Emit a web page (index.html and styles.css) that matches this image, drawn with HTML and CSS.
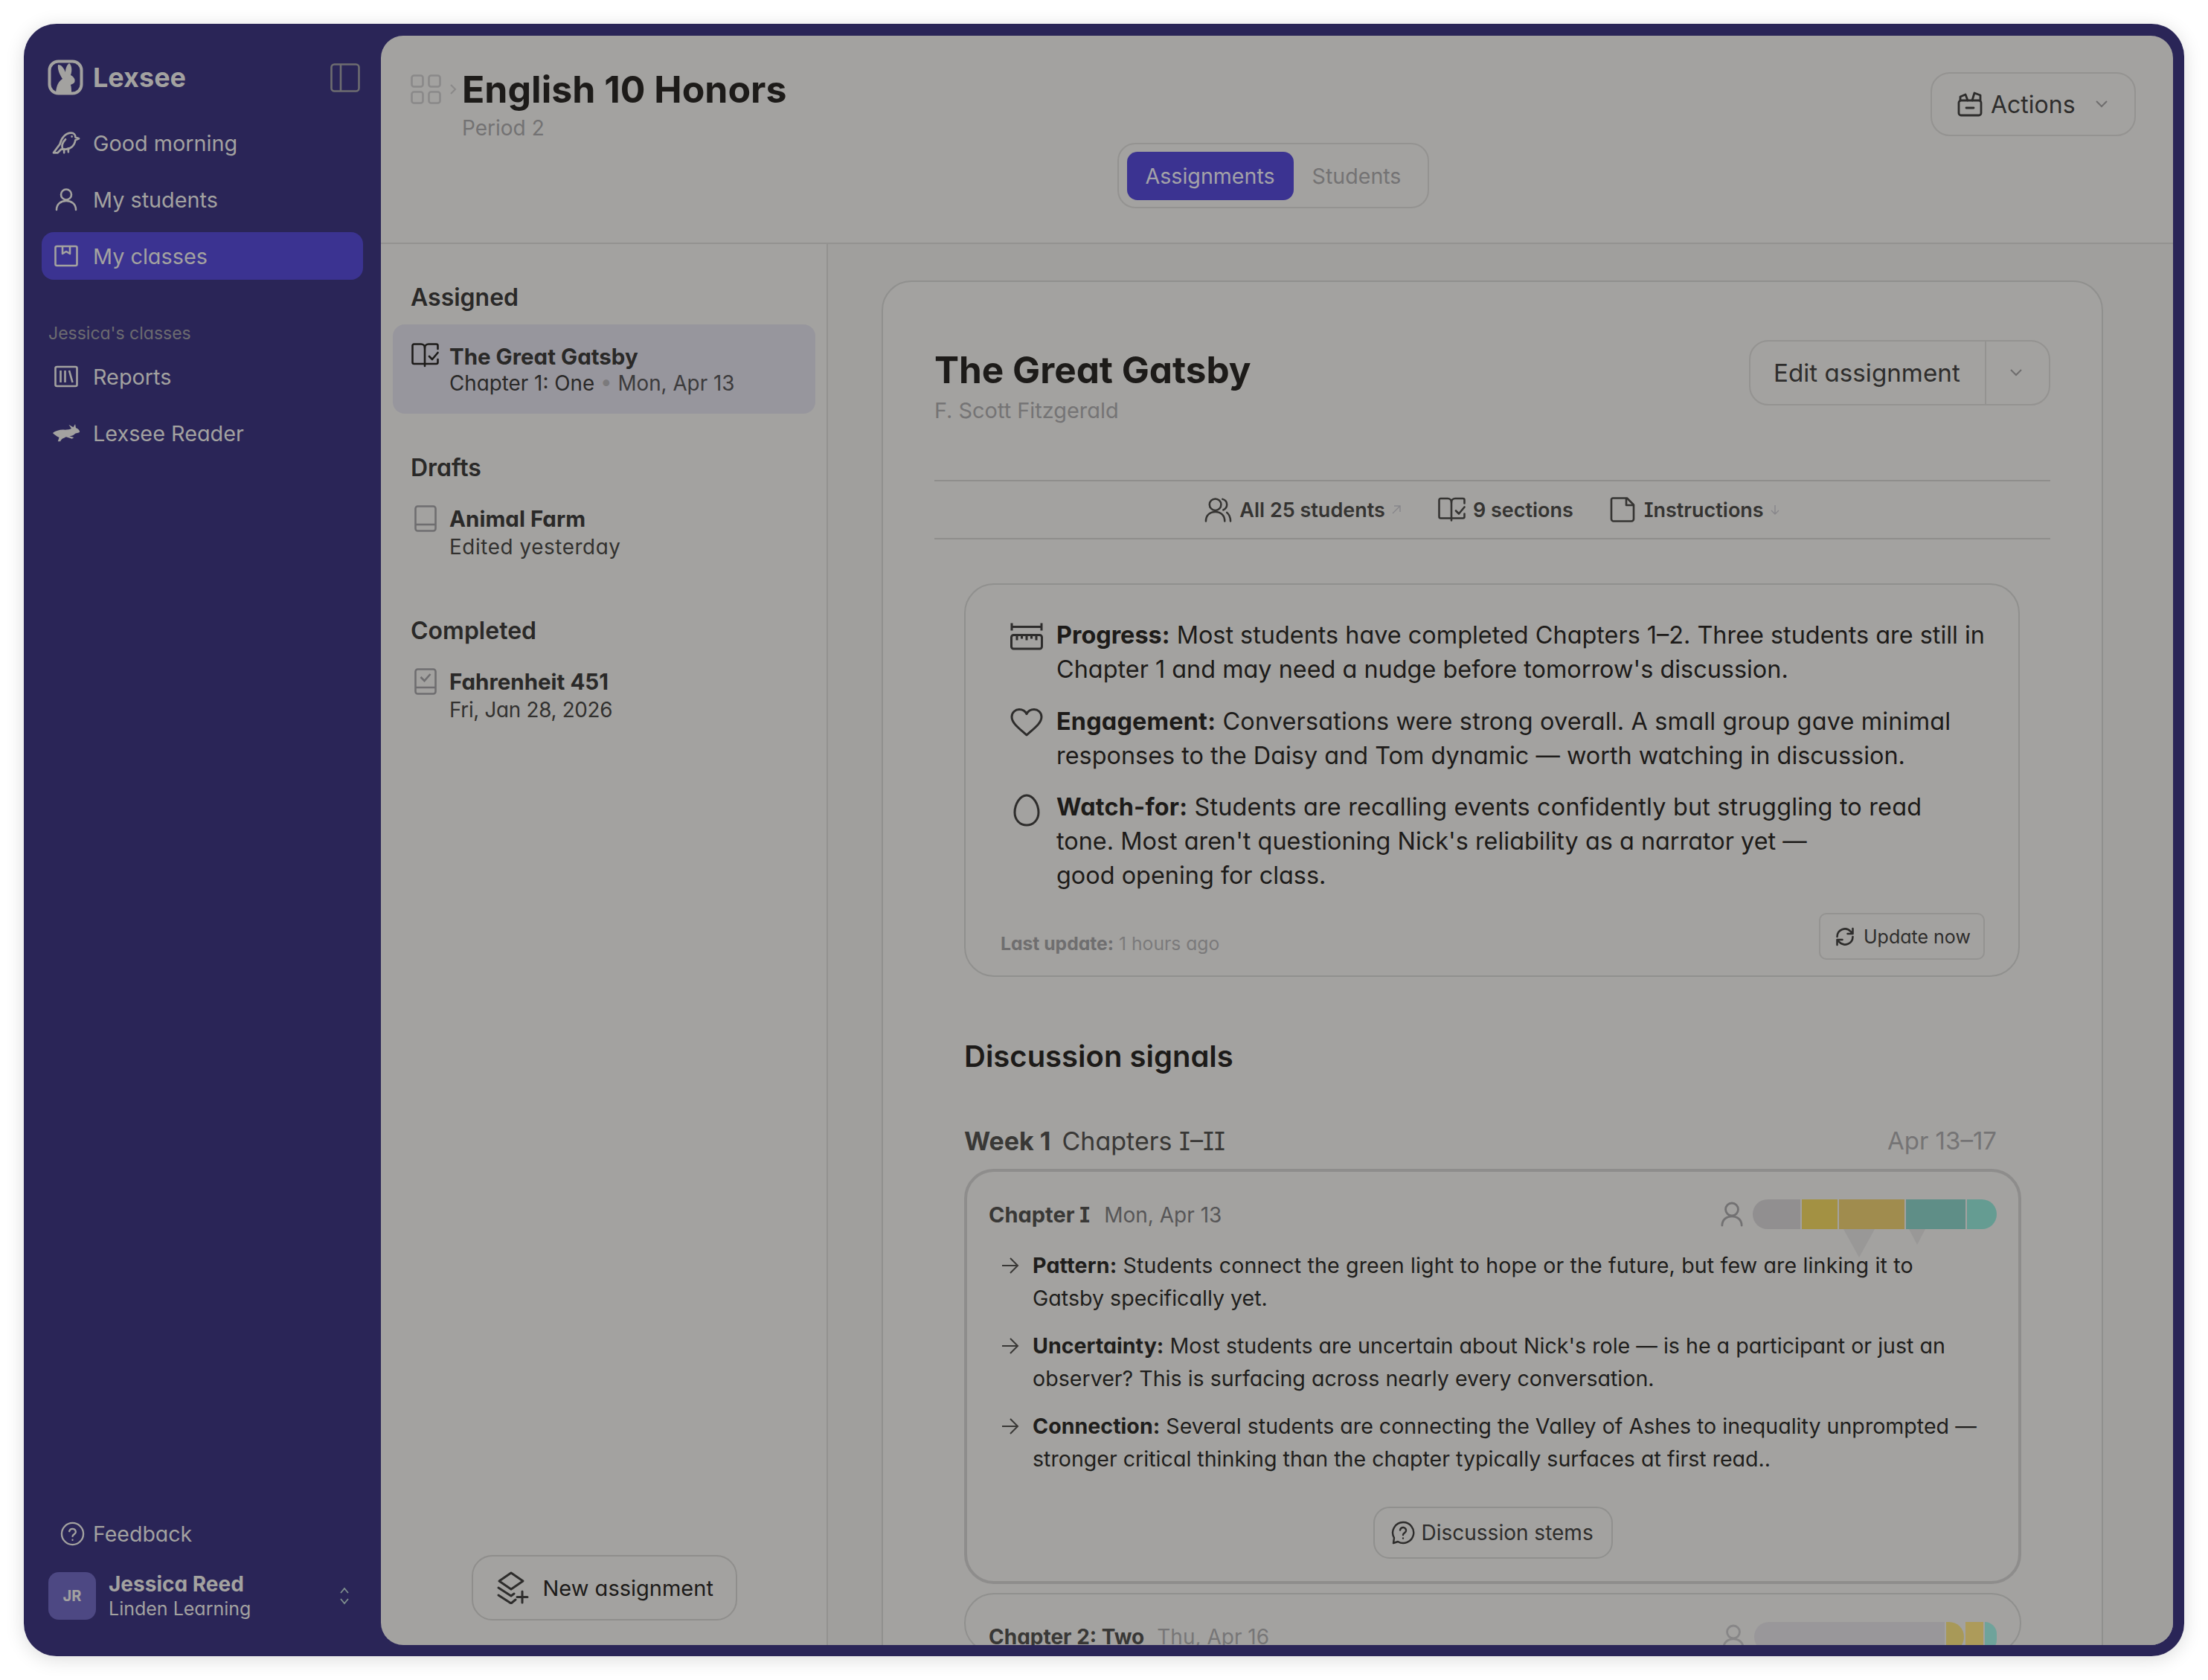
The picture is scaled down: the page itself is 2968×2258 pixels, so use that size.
FILE: index.html
```html
<!DOCTYPE html>
<html lang="en">
<head>
    <meta charset="UTF-8" />
    <title>Lexsee - English 10 Honors</title>
    <link rel="stylesheet" href="styles.css">
</head>
<body>
<div class="frame">
    <aside class="sidebar">
        <div class="brand">
            <svg class="brand-logo" viewBox="0 0 48 48">
                <rect x="2.5" y="2.5" width="43" height="43" rx="12" fill="none" stroke="currentColor" stroke-width="4" />
                <path fill="currentColor" d="M11 44C12 34 15 29 20 26C16 20 13 13 14 7C19 7 22 12 24 17C24 12 26 7 29 5C33 8 33 16 31 21C35 23 38 27 36 31C34 33 32 33 31 34C32 37 32 40 32 44Z" />
            </svg>
            <span class="brand-name">Lexsee</span>
            <svg class="brand-toggle" viewBox="0 0 40 39">
                <rect x="1.5" y="1.5" width="37" height="36" rx="4" fill="none" stroke="currentColor" stroke-width="2.6" />
                <path d="M14 2V37" stroke="currentColor" stroke-width="2.6" />
            </svg>
        </div>

        <nav class="nav">
            <a class="nav-item">
                <svg class="nav-icon nav-icon-wide" viewBox="0 0 40 32" fill="none" stroke="currentColor" stroke-width="2.8" stroke-linejoin="round" stroke-linecap="round">
                    <path d="M2 30L11 18C13 9 19 2 27 2C31 2 33 5 33 8L38 10L33 12C32 20 26 25 19 25L13 25L8 30Z" />
                    <path d="M19 11C15 15 13 20 15 25M17 25V30M23 24V29M28 7V7.1" />
                </svg>
                <span>Good morning</span>
            </a>
            <a class="nav-item">
                <svg class="nav-icon" viewBox="0 0 32 32" fill="none" stroke="currentColor" stroke-width="2.6" stroke-linecap="round">
                    <circle cx="16" cy="9.5" r="7" />
                    <path d="M3 30C3 22 9 18 16 18S29 22 29 30" />
                </svg>
                <span>My students</span>
            </a>
            <a class="nav-item nav-item-active">
                <svg class="nav-icon" viewBox="0 0 32 32" fill="none" stroke="currentColor" stroke-width="2.6" stroke-linejoin="round">
                    <rect x="1.5" y="3" width="29" height="26" rx="2" />
                    <path d="M11 3V13L16 10L21 13V3" />
                </svg>
                <span>My classes</span>
            </a>
        </nav>

        <div class="nav-label">Jessica's classes</div>
        <nav class="nav">
            <a class="nav-item">
                <svg class="nav-icon" viewBox="0 0 32 32" fill="none" stroke="currentColor" stroke-width="2.6" stroke-linejoin="round">
                    <rect x="1.5" y="3" width="29" height="26" rx="2" />
                    <path d="M8.5 8V24M14.5 8V24M20 8L24.5 24" />
                </svg>
                <span>Reports</span>
            </a>
            <a class="nav-item">
                <svg class="nav-icon nav-icon-wide" viewBox="0 0 44 30">
                    <path fill="currentColor" d="M1 15C6 11 14 9 20 10C24 10 28 9 30 8L26 2L33 6L36 1L37 7C40 8 43 11 43 13C43 15 38 15 36 16C33 19 30 20 27 20L34 22L31 24L22 21C18 23 14 24 13 28L9 28L11 22C7 20 4 18 1 15Z" />
                </svg>
                <span>Lexsee Reader</span>
            </a>
        </nav>

        <div class="sidebar-footer">
            <a class="feedback">
                <svg class="feedback-icon" viewBox="0 0 34 34" fill="none" stroke="currentColor" stroke-width="2.4" stroke-linecap="round">
                    <circle cx="17" cy="17" r="15" />
                    <path d="M12.5 13.5a4.6 4.6 0 0 1 9 1c0 3-4.5 3.5-4.5 6" />
                    <path d="M17 25.5V25.6" />
                </svg>
                <span>Feedback</span>
            </a>
            <div class="user">
                <div class="user-avatar">JR</div>
                <div class="user-text">
                    <div class="user-name">Jessica Reed</div>
                    <div class="user-org">Linden Learning</div>
                </div>
                <svg class="user-switch" viewBox="0 0 14 24" fill="none" stroke="currentColor" stroke-width="1.8">
                    <path d="M2 8L7 2L12 8M2 16L7 22L12 16" />
                </svg>
            </div>
        </div>
    </aside>

    <div class="content">
        <header class="page-head">
            <div class="crumb">
                <svg class="crumb-grid" viewBox="0 0 41 40" fill="none" stroke="currentColor" stroke-width="2.6">
                    <rect x="1.5" y="1.5" width="15" height="15" rx="3" />
                    <rect x="24.5" y="1.5" width="15" height="15" rx="3" />
                    <rect x="1.5" y="23.5" width="15" height="15" rx="3" />
                    <rect x="24.5" y="23.5" width="15" height="15" rx="3" />
                </svg>
                <svg class="crumb-sep" viewBox="0 0 10 16" fill="none" stroke="currentColor" stroke-width="2">
                    <path d="M2 2L8 8L2 14" />
                </svg>
                <div>
                    <h1 class="page-title">English 10 Honors</h1>
                    <div class="page-sub">Period 2</div>
                </div>
            </div>
            <div class="tabs">
                <a class="tab tab-active">Assignments</a>
                <a class="tab">Students</a>
            </div>
            <button class="actions">
                <svg class="actions-icon" viewBox="0 0 34 34" fill="none" stroke="currentColor" stroke-width="2.8" stroke-linejoin="round" stroke-linecap="round">
                    <rect x="2" y="12" width="30" height="20" rx="3" />
                    <path d="M12 22H22M4 12V7L11 4L14 12M20 12L23 2L31 5V12" />
                </svg>
                <span>Actions</span>
                <svg class="actions-chevron" viewBox="0 0 18 10" fill="none" stroke="currentColor" stroke-width="2">
                    <path d="M2 1L9 8L16 1" />
                </svg>
            </button>
        </header>

        <div class="page-body">
            <section class="assignments">
                <div class="list-section">
                    <h2 class="list-label">Assigned</h2>
                    <div class="list-item list-item-active">
                        <svg class="list-icon" viewBox="0 0 37 33" fill="none" stroke="currentColor" stroke-width="2.6" stroke-linejoin="round" stroke-linecap="round">
                            <path d="M18 28H3.5A2 2 0 0 1 1.5 26V3.5A2 2 0 0 1 3.5 1.5H13A5 5 0 0 1 18 6.5V31" />
                            <path d="M18 6.5A5 5 0 0 1 23 1.5H33.5A2 2 0 0 1 35.5 3.5V8M35.5 22V26A2 2 0 0 1 33.5 28H18" />
                            <path d="M24 18L28 22L35.5 13" />
                        </svg>
                        <div class="list-text">
                            <div class="list-title">The Great Gatsby</div>
                            <div class="list-sub">Chapter 1: One <span class="list-dot">•</span> <span class="list-date">Mon, Apr 13</span></div>
                        </div>
                    </div>
                </div>
                <div class="list-section">
                    <h2 class="list-label">Drafts</h2>
                    <div class="list-item">
                        <svg class="list-icon list-icon-book" viewBox="0 0 30 36" fill="none" stroke="currentColor" stroke-width="2.6">
                            <rect x="1.5" y="1.5" width="27" height="33" rx="3" />
                            <path d="M1.5 26H28.5" />
                        </svg>
                        <div class="list-text">
                            <div class="list-title">Animal Farm</div>
                            <div class="list-sub list-sub-loose">Edited yesterday</div>
                        </div>
                    </div>
                </div>
                <div class="list-section">
                    <h2 class="list-label">Completed</h2>
                    <div class="list-item">
                        <svg class="list-icon list-icon-book" viewBox="0 0 30 36" fill="none" stroke="currentColor" stroke-width="2.6">
                            <rect x="1.5" y="1.5" width="27" height="33" rx="3" />
                            <path d="M1.5 26H28.5M8.5 12L13.5 17L21.5 8" />
                        </svg>
                        <div class="list-text">
                            <div class="list-title">Fahrenheit 451</div>
                            <div class="list-sub list-sub-tight">Fri, Jan 28, 2026</div>
                        </div>
                    </div>
                </div>
                <button class="new-assignment">
                    <svg class="new-icon" viewBox="0 0 44 44" fill="none" stroke="currentColor" stroke-width="3" stroke-linejoin="round" stroke-linecap="round">
                        <path d="M20 2L36 13L20 24L4 13Z" />
                        <path d="M3 22L20 33L24 30M3 32L20 43L26 38M35 27V42M28 34.5H42" />
                    </svg>
                    <span>New assignment</span>
                </button>
            </section>

            <main class="detail">
                <article class="card">
                    <div class="card-head">
                        <div class="card-heading">
                            <h2 class="card-title">The Great Gatsby</h2>
                            <div class="card-author">F. Scott Fitzgerald</div>
                        </div>
                        <div class="split-button">
                            <span class="split-label">Edit assignment</span>
                            <span class="split-caret">
                                <svg viewBox="0 0 18 10" fill="none" stroke="currentColor" stroke-width="2">
                                    <path d="M2 1L9 8L16 1" />
                                </svg>
                            </span>
                        </div>
                    </div>

                    <div class="meta">
                        <span class="meta-item">
                            <svg class="meta-icon" viewBox="0 0 38 34" fill="none" stroke="currentColor" stroke-width="2.6" stroke-linecap="round">
                                <circle cx="15" cy="10" r="8" />
                                <path d="M2 33C2 25 7 20 15 20S28 25 28 33M25 2.5C29 3.5 31 6.5 31 10C31 13.5 29 16 26 17.5M31 21C34 23.5 36 27.5 36 33" />
                            </svg>
                            <span>All 25 students</span>
                            <svg class="meta-arrow" viewBox="0 0 14 14" fill="none" stroke="currentColor" stroke-width="1.4">
                                <path d="M2 12L12 2M4 2H12V10" />
                            </svg>
                        </span>
                        <span class="meta-item">
                            <svg class="meta-icon" viewBox="0 0 37 33" fill="none" stroke="currentColor" stroke-width="2.6" stroke-linejoin="round" stroke-linecap="round">
                                <path d="M18 28H3.5A2 2 0 0 1 1.5 26V3.5A2 2 0 0 1 3.5 1.5H13A5 5 0 0 1 18 6.5V31" />
                                <path d="M18 6.5A5 5 0 0 1 23 1.5H33.5A2 2 0 0 1 35.5 3.5V8M35.5 22V26A2 2 0 0 1 33.5 28H18" />
                                <path d="M24 18L28 22L35.5 13" />
                            </svg>
                            <span>9 sections</span>
                        </span>
                        <span class="meta-item">
                            <svg class="meta-icon meta-icon-file" viewBox="0 0 34 34" fill="none" stroke="currentColor" stroke-width="2.6" stroke-linejoin="round">
                                <path d="M4 1.5H23L32 10.5V29.5A3 3 0 0 1 29 32.5H5A3 3 0 0 1 2 29.5V3.5A2 2 0 0 1 4 1.5Z" />
                                <path d="M22 1.5V11H32" />
                            </svg>
                            <span>Instructions</span>
                            <svg class="meta-arrow" viewBox="0 0 14 14" fill="none" stroke="currentColor" stroke-width="1.4">
                                <path d="M7 1V13M2 8L7 13L12 8" />
                            </svg>
                        </span>
                    </div>

                    <section class="summary">
                        <div class="summary-row">
                            <svg class="summary-icon" viewBox="0 0 44 37" fill="none" stroke="currentColor" stroke-width="3">
                                <path d="M2 1V11M42 1V11M2 6H42" />
                                <rect x="1.5" y="17" width="41" height="18.5" rx="3" />
                                <path d="M9 17V24M15.5 17V22M22 17V24M28.5 17V22M35 17V24" />
                            </svg>
                            <p><strong>Progress:</strong> Most students have completed Chapters 1–2. Three students are still in<br>Chapter 1 and may need a nudge before tomorrow's discussion.</p>
                        </div>
                        <div class="summary-row summary-row-loose">
                            <svg class="summary-icon" viewBox="0 0 44 38" fill="none" stroke="currentColor" stroke-width="3" stroke-linejoin="round">
                                <path d="M22 36C12 27 2 20 2 11.5C2 5.5 7 1.5 12 1.5C16 1.5 20 3.5 22 7.5C24 3.5 28 1.5 32 1.5C37 1.5 42 5.5 42 11.5C42 20 32 27 22 36Z" />
                            </svg>
                            <p><strong>Engagement:</strong> Conversations were strong overall. A small group gave minimal<br>responses to the Daisy and Tom dynamic — worth watching in discussion.</p>
                        </div>
                        <div class="summary-row summary-row-loose">
                            <svg class="summary-icon summary-icon-egg" viewBox="0 0 36 44" fill="none" stroke="currentColor" stroke-width="3">
                                <path d="M18 2C9 2 2 14 2 25C2 35 9 42 18 42C27 42 34 35 34 25C34 14 27 2 18 2Z" />
                            </svg>
                            <p><strong>Watch-for:</strong> Students are recalling events confidently but struggling to read<br>tone. Most aren't questioning Nick's reliability as a narrator yet —<br>good opening for class.</p>
                        </div>
                        <div class="summary-foot">
                            <div class="summary-updated"><strong>Last update:</strong> 1 hours ago</div>
                            <button class="update-now">
                                <svg viewBox="0 0 24 24" fill="none" stroke="currentColor" stroke-width="2.2" stroke-linejoin="round" stroke-linecap="round">
                                    <path d="M3 12A9 9 0 0 1 18.5 5.8L21 8.5M21 2.5V8.5H15M21 12A9 9 0 0 1 5.5 18.2L3 15.5M3 21.5V15.5H9" />
                                </svg>
                                <span>Update now</span>
                            </button>
                        </div>
                    </section>

                    <section class="signals">
                        <h3 class="signals-title">Discussion signals</h3>
                        <div class="week-row">
                            <div><strong>Week 1</strong><span class="week-chapters">Chapters I–II</span></div>
                            <div class="week-dates">Apr 13–17</div>
                        </div>

                        <div class="chapter chapter-open">
                            <div class="chapter-head">
                                <div class="chapter-name"><strong>Chapter I</strong><span class="chapter-date">Mon, Apr 13</span></div>
                                <svg class="chapter-person" viewBox="0 0 32 36" fill="none" stroke="currentColor" stroke-width="3" stroke-linecap="round">
                                    <circle cx="16" cy="11" r="9" />
                                    <path d="M2 34C2 26 8 21 16 21S30 26 30 34" />
                                </svg>
                                <div class="signal-bar">
                                    <span class="seg seg-none" style="width: 64px"></span>
                                    <span class="seg seg-mid-light" style="width: 48px"></span>
                                    <span class="seg seg-mid" style="width: 88px"></span>
                                    <span class="seg seg-high" style="width: 80px"></span>
                                    <span class="seg seg-high-light" style="width: 40px"></span>
                                    <span class="bar-tip bar-tip-large"></span>
                                    <span class="bar-tip bar-tip-small"></span>
                                </div>
                            </div>
                            <ul class="signal-list">
                                <li class="signal-loose">
                                    <svg class="signal-arrow" viewBox="0 0 24 24" fill="none" stroke="currentColor" stroke-width="2">
                                        <path d="M1 12H22M12 2L22 12L12 22" />
                                    </svg>
                                    <p><strong>Pattern:</strong> Students connect the green light to hope or the future, but few are linking it to<br>Gatsby specifically yet.</p>
                                </li>
                                <li>
                                    <svg class="signal-arrow" viewBox="0 0 24 24" fill="none" stroke="currentColor" stroke-width="2">
                                        <path d="M1 12H22M12 2L22 12L12 22" />
                                    </svg>
                                    <p><strong>Uncertainty:</strong> Most students are uncertain about Nick's role — is he a participant or just an<br>observer? This is surfacing across nearly every conversation.</p>
                                </li>
                                <li>
                                    <svg class="signal-arrow" viewBox="0 0 24 24" fill="none" stroke="currentColor" stroke-width="2">
                                        <path d="M1 12H22M12 2L22 12L12 22" />
                                    </svg>
                                    <p><strong>Connection:</strong> Several students are connecting the Valley of Ashes to inequality unprompted —<br>stronger critical thinking than the chapter typically surfaces at first read..</p>
                                </li>
                            </ul>
                            <button class="stems">
                                <svg viewBox="0 0 32 32" fill="none" stroke="currentColor" stroke-width="2.4" stroke-linecap="round" stroke-linejoin="round">
                                    <path d="M16 2A14 14 0 1 1 9 28L3 30L4 23A14 14 0 0 1 16 2Z" />
                                    <path d="M12 12.5A4 4 0 0 1 20 13.5C20 16 16 16.5 16 19M16 23.5V23.6" />
                                </svg>
                                <span>Discussion stems</span>
                            </button>
                        </div>

                        <div class="chapter">
                            <div class="chapter-head">
                                <div class="chapter-name chapter-name-muted"><strong>Chapter 2: Two</strong><span class="chapter-date">Thu, Apr 16</span></div>
                                <svg class="chapter-person chapter-person-light" viewBox="0 0 32 36" fill="none" stroke="currentColor" stroke-width="3" stroke-linecap="round">
                                    <circle cx="16" cy="11" r="9" />
                                    <path d="M2 34C2 26 8 21 16 21S30 26 30 34" />
                                </svg>
                                <div class="signal-bar">
                                    <span class="seg seg-empty" style="width: 256px"></span>
                                    <span class="seg seg-soft-a" style="width: 24px"></span>
                                    <span class="seg seg-soft-b" style="width: 24px"></span>
                                    <span class="seg seg-soft-c" style="width: 16px"></span>
                                </div>
                            </div>
                        </div>
                    </section>
                </article>
            </main>
        </div>
    </div>
</div>
</body>
</html>
```
FILE: styles.css
```css
* {
    box-sizing: border-box;
}

html, body {
    height: 100%;
}

body {
    margin: 0;
    padding: 32px;
    background: #fff;
    font-family: Inter, "Noto Sans", sans-serif;
    font-feature-settings: "cv11", "cv08";
    color: #1d1b19;
}

h1, h2, h3, p, ul {
    margin: 0;
    padding: 0;
}

button {
    font: inherit;
    font-feature-settings: inherit;
    color: inherit;
    background: none;
    cursor: pointer;
}

.frame {
    display: flex;
    width: 2904px;
    height: 2194px;
    background: #2a2557;
    border-radius: 44px;
    box-shadow: 0 4px 26px rgba(0, 0, 0, 0.14);
    overflow: hidden;
}

/* sidebar */
.sidebar {
    display: flex;
    flex-direction: column;
    flex: 0 0 480px;
    padding: 48px 24px 48px;
    color: #a3a2a0;
}

.brand {
    display: flex;
    align-items: center;
    height: 48px;
    padding: 0 4px 0 8px;
    margin-bottom: 32px;
}

.brand-logo {
    width: 48px;
    height: 48px;
}

.brand-name {
    margin-left: 13px;
    font-size: 36px;
    font-weight: 700;
}

.brand-toggle {
    width: 40px;
    height: 39px;
    margin-left: auto;
    color: #6d6c70;
}

.nav {
    display: flex;
    flex-direction: column;
    gap: 12px;
}

.nav-item {
    display: flex;
    align-items: center;
    gap: 20px;
    height: 64px;
    padding-left: 17px;
    border-radius: 16px;
    font-size: 28.8px;
}

.nav-item-active {
    background: #3b3391;
}

.nav-icon {
    flex: 0 0 32px;
    width: 32px;
    height: 32px;
}

.nav-icon-wide {
    flex-basis: 38px;
    width: 38px;
    margin: 0 -3px;
}

.nav-label {
    margin: 57px 0 11px 9px;
    font-size: 23px;
    line-height: 30px;
    color: #6c6b70;
}

.sidebar-footer {
    margin-top: auto;
}

.feedback {
    display: flex;
    align-items: center;
    gap: 11px;
    height: 40px;
    padding-left: 25px;
    margin-bottom: 31px;
    font-size: 28.5px;
}

.feedback-icon {
    width: 33px;
    height: 33px;
}

.user {
    display: flex;
    align-items: center;
    padding-left: 9px;
}

.user-avatar {
    display: flex;
    align-items: center;
    justify-content: center;
    width: 64px;
    height: 64px;
    border-radius: 14px;
    background: #4d4883;
    font-size: 20px;
    font-weight: 700;
}

.user-text {
    margin-left: 17px;
}

.user-name {
    font-size: 28px;
    font-weight: 700;
    line-height: 34px;
}

.user-org {
    font-size: 25px;
    line-height: 32px;
}

.user-switch {
    width: 14px;
    height: 24px;
    margin-left: auto;
    margin-right: 18px;
    color: #7f8f8e;
}

/* main panel */
.content {
    display: flex;
    flex-direction: column;
    flex: 1;
    min-width: 0;
    margin: 16px 15px 15px 0;
    background: #a3a2a0;
    border-radius: 30px;
    overflow: hidden;
}

.page-head {
    display: grid;
    grid-template-columns: 1fr auto 1fr;
    flex: 0 0 280px;
    padding: 42px 50px 46px 40px;
    border-bottom: 2px solid #939290;
}

.crumb {
    display: flex;
    align-items: flex-start;
}

.crumb-grid {
    width: 41px;
    height: 40px;
    margin-top: 10px;
    color: #8a8989;
}

.crumb-sep {
    width: 10px;
    height: 16px;
    margin: 22px 7px 0 11px;
    color: #8a8989;
}

.page-title {
    font-size: 50px;
    font-weight: 650;
    line-height: 60px;
}

.page-sub {
    margin-top: 4px;
    font-size: 28px;
    line-height: 36px;
    color: #737273;
}

.tabs {
    display: flex;
    align-items: center;
    align-self: end;
    height: 88px;
    padding: 0 11px;
    border: 2px solid #949391;
    border-radius: 24px;
}

.tab {
    display: flex;
    align-items: center;
    height: 65px;
    padding: 0 25px;
    border-radius: 14px;
    font-size: 28.6px;
    color: #747374;
}

.tab-active {
    background: #3b3391;
    color: #a3a2a8;
}

.actions {
    display: flex;
    align-items: center;
    justify-self: end;
    height: 86px;
    width: 276px;
    padding: 0 0 0 34px;
    margin-top: 7px;
    border: 2px solid #949391;
    border-radius: 26px;
    font-size: 32px;
    color: #2e2d2c;
}

.actions-icon {
    width: 34px;
    height: 34px;
    margin-right: 11px;
}

.actions-chevron {
    width: 18px;
    height: 10px;
    margin-left: 26px;
    color: #6f6e6e;
}

.page-body {
    display: flex;
    flex: 1;
    min-height: 0;
}

/* assignment list */
.assignments {
    display: flex;
    flex-direction: column;
    flex: 0 0 601px;
    padding: 56px 15px 33px 16px;
    border-right: 2px solid #939290;
}

.list-section + .list-section {
    margin-top: 57px;
}

.list-section:last-of-type {
    margin-top: 58px;
}

.list-label {
    padding-left: 24px;
    margin-bottom: 20px;
    font-size: 32px;
    font-weight: 600;
    line-height: 32px;
    color: #2a2928;
}

.list-item {
    display: flex;
    align-items: flex-start;
    padding: 14px 25px 21px 25px;
}

.list-item .list-sub {
    margin-top: 2px;
}

.list-item-active {
    height: 120px;
    padding-top: 25px;
    padding-bottom: 23px;
    background: #97969d;
    border-radius: 16px;
}

.list-item-active .list-sub {
    margin-top: 0;
    color: #2a2928;
}

.list-icon {
    flex: 0 0 37px;
    width: 37px;
    height: 33px;
    margin-right: 14px;
}

.list-icon-book {
    flex-basis: 30px;
    width: 30px;
    height: 36px;
    margin-left: 4px;
    margin-right: 17px;
    color: #6f6e70;
}

.list-title {
    font-size: 29.5px;
    font-weight: 700;
    line-height: 36px;
    color: #2a2928;
}

.list-sub {
    font-size: 27.8px;
    line-height: 36px;
    color: #32312f;
}

.list-sub-loose {
    letter-spacing: 0.6px;
}

.list-sub-tight {
    letter-spacing: -0.3px;
}

.list-dot {
    color: #7b7a7c;
}

.list-date {
    color: #3c3b3c;
}

.new-assignment {
    display: flex;
    align-items: center;
    align-self: center;
    gap: 19px;
    width: 357px;
    height: 88px;
    padding: 0 0 0 31px;
    margin-top: auto;
    margin-left: 0;
    border: 2px solid #8f8e8c;
    border-radius: 28px;
    font-size: 29px;
    color: #1d1b19;
}

.new-icon {
    width: 44px;
    height: 44px;
    color: #2e2d2c;
}

/* detail card */
.detail {
    flex: 1;
    min-width: 0;
    padding: 49px 94px 0 72px;
    background: #a09f9d;
}

.card {
    padding: 78px 69px 60px;
    border: 2px solid #90908e;
    border-radius: 40px;
    background: #a3a2a0;
}

.card-head {
    display: flex;
    align-items: flex-start;
    justify-content: space-between;
    margin-bottom: 75px;
}

.card-heading {
    padding-top: 12px;
}

.card-title {
    font-size: 49.5px;
    font-weight: 650;
    line-height: 56px;
}

.card-author {
    margin-top: 9px;
    font-size: 28.9px;
    line-height: 36px;
    color: #757475;
}

.split-button {
    display: flex;
    align-items: center;
    height: 88px;
    border: 2px solid #949391;
    border-radius: 26px;
    font-size: 33.2px;
    color: #2e2d2c;
}

.split-label {
    display: flex;
    align-items: center;
    width: 317px;
    height: 100%;
    padding-left: 31px;
    border-right: 2px solid #949391;
}

.split-caret {
    display: flex;
    align-items: center;
    justify-content: center;
    width: 84px;
    color: #6f6e6e;
}

.split-caret svg {
    width: 18px;
    height: 10px;
    margin-right: 4px;
}

.meta {
    display: flex;
    align-items: center;
    justify-content: center;
    gap: 49px;
    height: 80px;
    border-top: 2px solid #8f8e8c;
    border-bottom: 2px solid #8f8e8c;
    font-size: 27px;
    font-weight: 600;
    color: #353432;
}

.meta-item {
    display: flex;
    align-items: center;
}

.meta-icon {
    width: 37px;
    height: 34px;
    margin-right: 10px;
}

.meta-icon-file {
    width: 34px;
    margin-right: 12px;
}

.meta-arrow {
    width: 14px;
    height: 14px;
    margin-left: 8px;
    color: #87868a;
}

/* summary box */
.summary {
    margin: 59px 41px 0 40px;
    padding: 45px 0 21px;
    border: 2px solid #90908e;
    border-radius: 40px;
    font-size: 32.4px;
    line-height: 46px;
}

.summary-row {
    display: flex;
    align-items: flex-start;
    margin-left: 60px;
    margin-bottom: 23.5px;
    white-space: nowrap;
}

.summary-row-loose p::first-line {
    letter-spacing: 0.18px;
}

.summary-icon {
    flex: 0 0 44px;
    width: 44px;
    height: 38px;
    margin-top: 5px;
    margin-right: 18px;
    color: #2e2d2c;
}

.summary-icon-egg {
    height: 44px;
}

.summary-foot {
    display: flex;
    align-items: flex-end;
    justify-content: space-between;
    padding: 0 45px 0 47px;
    margin-top: 27px;
}

.summary-updated {
    margin-bottom: 7px;
    font-size: 24.7px;
    line-height: 30px;
    color: #7b7a7b;
}

.summary-updated strong {
    color: #6f6e6f;
}

.update-now {
    display: flex;
    align-items: center;
    gap: 11px;
    width: 223px;
    height: 63px;
    padding: 0 0 0 19px;
    border: 2px solid #949391;
    border-radius: 10px;
    font-size: 25px;
    color: #2e2d2c;
}

.update-now svg {
    width: 28px;
    height: 28px;
}

/* discussion signals */
.signals {
    margin: 0 39px 0 40px;
}

.signals-title {
    margin-top: 82px;
    font-size: 40px;
    font-weight: 600;
    line-height: 50px;
}

.week-row {
    display: flex;
    align-items: center;
    justify-content: space-between;
    height: 40px;
    padding-right: 33px;
    margin: 68px 0 18px;
    font-size: 34px;
    color: #393836;
}

.week-chapters {
    margin-left: 15px;
}

.week-dates {
    font-size: 33px;
    color: #757475;
}

.chapter {
    padding: 37px 31px 0 31px;
    margin-top: 12px;
    border: 2px solid #90908e;
    border-radius: 40px;
}

.chapter-open {
    padding: 37px 29px 30px;
    border: 4px solid #8e8d8c;
}

.chapter-head {
    display: flex;
    align-items: center;
    font-size: 28px;
}

.chapter-name {
    margin-right: auto;
    color: #393836;
}

.chapter-name strong {
    font-size: 29px;
}

.chapter-date {
    margin-left: 19px;
    color: #575657;
}

.chapter-name-muted strong {
    font-size: 28px;
}

.chapter-name-muted .chapter-date {
    margin-left: 17px;
    color: #777677;
}

.chapter-person {
    width: 30px;
    height: 34px;
    margin-right: 13px;
    color: #727172;
}

.chapter-person-light {
    color: #878687;
}

.signal-bar {
    position: relative;
    display: flex;
    gap: 2px;
    height: 40px;
}

.seg {
    height: 100%;
}

.seg:first-child {
    border-radius: 20px 0 0 20px;
}

.seg:nth-last-child(3) {
    border-radius: 0 20px 20px 0;
}

.seg-none { background: #918f90; }
.seg-mid-light { background: #a39143; }
.seg-mid { background: #a08c4e; }
.seg-high { background: #5f8e87; }
.seg-high-light { background: #659c92; }
.seg-empty { background: #99979a; }
.seg-soft-a { background: #a89958; }
.seg-soft-b { background: #ad9b5a; }
.seg-soft-c { background: #6fa39b; border-radius: 0 20px 20px 0; }

.bar-tip {
    position: absolute;
    top: 100%;
    background: #999897;
    clip-path: polygon(0 0, 100% 0, 50% 100%);
}

.bar-tip-large {
    left: 122px;
    width: 42px;
    height: 38px;
}

.bar-tip-small {
    left: 210px;
    width: 22px;
    height: 21px;
}

.signal-list {
    display: flex;
    flex-direction: column;
    gap: 20px;
    margin: 27px 0 0 17px;
    list-style: none;
    font-size: 28.6px;
    line-height: 44px;
    color: #1f1e1c;
    white-space: nowrap;
}

.signal-list li {
    display: flex;
    align-items: flex-start;
}

.signal-loose p::first-line {
    letter-spacing: 0.14px;
}

.signal-arrow {
    flex: 0 0 24px;
    width: 24px;
    height: 24px;
    margin-top: 10px;
    margin-right: 18px;
    color: #393836;
}

.stems {
    display: flex;
    align-items: center;
    gap: 9px;
    width: 322px;
    height: 70px;
    padding: 0 0 0 22px;
    margin: 42px auto 0;
    border: 2px solid #90908e;
    border-radius: 22px;
    font-size: 28px;
    color: #2e2d2c;
}

.stems svg {
    width: 32px;
    height: 32px;
}
```
